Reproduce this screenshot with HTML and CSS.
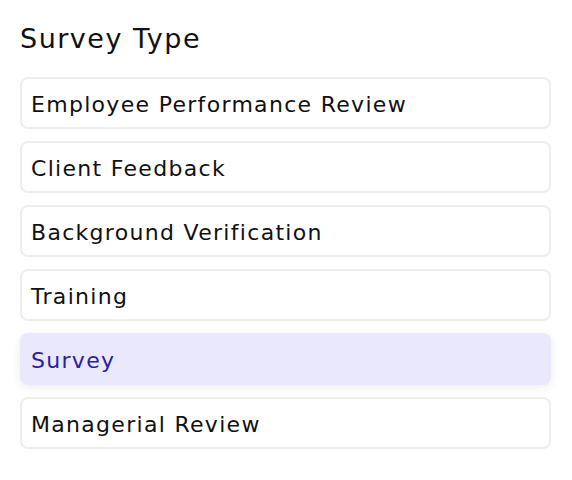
FILE: index.html
```html
<!DOCTYPE html>
<html>
<head>
<meta charset="utf-8">
<link rel="stylesheet" href="styles.css">
</head>
<body>
<div class="panel">
  <h2 class="title">Survey Type</h2>
  <ul class="list">
    <li class="item">Employee Performance Review</li>
    <li class="item">Client Feedback</li>
    <li class="item">Background Verification</li>
    <li class="item">Training</li>
    <li class="item selected">Survey</li>
    <li class="item">Managerial Review</li>
  </ul>
</div>
</body>
</html>
```
FILE: styles.css
```css
html, body {
  margin: 0;
  padding: 0;
  background: #ffffff;
}
body {
  font-family: "DejaVu Sans", "Open Sans", sans-serif;
  color: #111111;
}
.panel {
  padding: 20px 21px 0 20px;
}
.title {
  margin: 0;
  font-size: 27px;
  letter-spacing: 1.5px;
  font-weight: 400;
  line-height: 38px;
  height: 57px;
}
.list {
  list-style: none;
  margin: 0;
  padding: 0;
  display: flex;
  flex-direction: column;
  gap: 12px;
}
.item {
  box-sizing: border-box;
  height: 52px;
  border: 2px solid #eeeeee;
  border-radius: 8px;
  padding: 3px 9px 0 9px;
  display: flex;
  align-items: center;
  font-size: 22px;
  letter-spacing: 1.3px;
  color: #111111;
}
.item.selected {
  background: #e9e8fd;
  border-color: #e9e8fd;
  color: #2b1f9e;
  box-shadow: 0 2px 10px rgba(0, 0, 0, 0.08);
}
```
